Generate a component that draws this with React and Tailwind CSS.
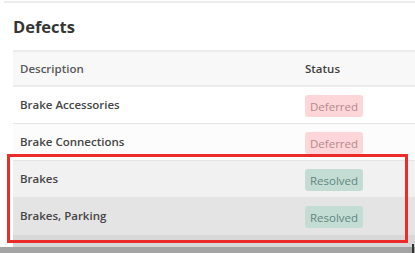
import React from "react";

const rows = [
  { name: "Brake Accessories", status: "Deferred", bg: "bg-white" },
  { name: "Brake Connections", status: "Deferred", bg: "bg-[#fcfcfc]" },
  { name: "Brakes", status: "Resolved", bg: "bg-[#f1f1f1]" },
  { name: "Brakes, Parking", status: "Resolved", bg: "bg-[#e4e4e4]" },
];

function StatusPill({ status }) {
  if (status === "Deferred") {
    return (
      <span className="inline-flex items-center h-[22px] px-[5px] rounded-[3px] bg-[#fcd6d8] text-[#b58a8c] text-[11.5px] font-normal">
        Deferred
      </span>
    );
  }
  return (
    <span className="inline-flex items-center h-[22px] px-[5px] rounded-[3px] bg-[#c3ddd5] text-[#62867e] text-[11.5px] font-normal">
      Resolved
    </span>
  );
}

export default function App() {
  return (
    <div
      className="relative w-[415px] h-[253px] overflow-hidden bg-white"
      style={{ fontFamily: '"Open Sans", "Liberation Sans", sans-serif' }}
    >
      <div className="h-[253px] flex flex-col">
        <div className="mt-[1px] ml-[4px] h-[2px] bg-[#ececec]" />
        <div className="flex-1 pl-[13px] flex flex-col">
          <h2 className="mt-[13px] h-[21px] leading-[21px] text-[16.5px] font-bold text-[#353535]">
            Defects
          </h2>
          <div className="mt-[13px] flex flex-col">
            <div className="flex items-center h-[37px] bg-[#f8f8f8] border-y-2 border-[#ececec] text-[11.5px] font-semibold text-[#585858]">
              <div className="w-[285px] pl-[7px]">Description</div>
              <div className="pl-[7px] text-[#3f3f3f]">Status</div>
            </div>
            {rows.map((r) => (
              <div
                key={r.name}
                className={`flex items-center h-[37px] border-b border-[#e4e4e4] ${r.bg}`}
              >
                <div className="w-[285px] pl-[7px] text-[11.5px] font-semibold text-[#454545]">
                  {r.name}
                </div>
                <div className="pl-[7px]">
                  <StatusPill status={r.status} />
                </div>
              </div>
            ))}
          </div>
          <div className="flex-1 bg-[#d8d8d8]" />
        </div>
        <div className="h-[6px] bg-[#a4a4a4]" />
      </div>
      {/* highlight frame drawn over the last two rows */}
      <div className="absolute left-[7px] top-[154px] w-[401px] h-[89px] border-[3px] border-[#ec2b2b]" />
      <div className="absolute left-[412px] top-[244px] w-[2px] h-[9px] bg-[#333]" />
    </div>
  );
}
